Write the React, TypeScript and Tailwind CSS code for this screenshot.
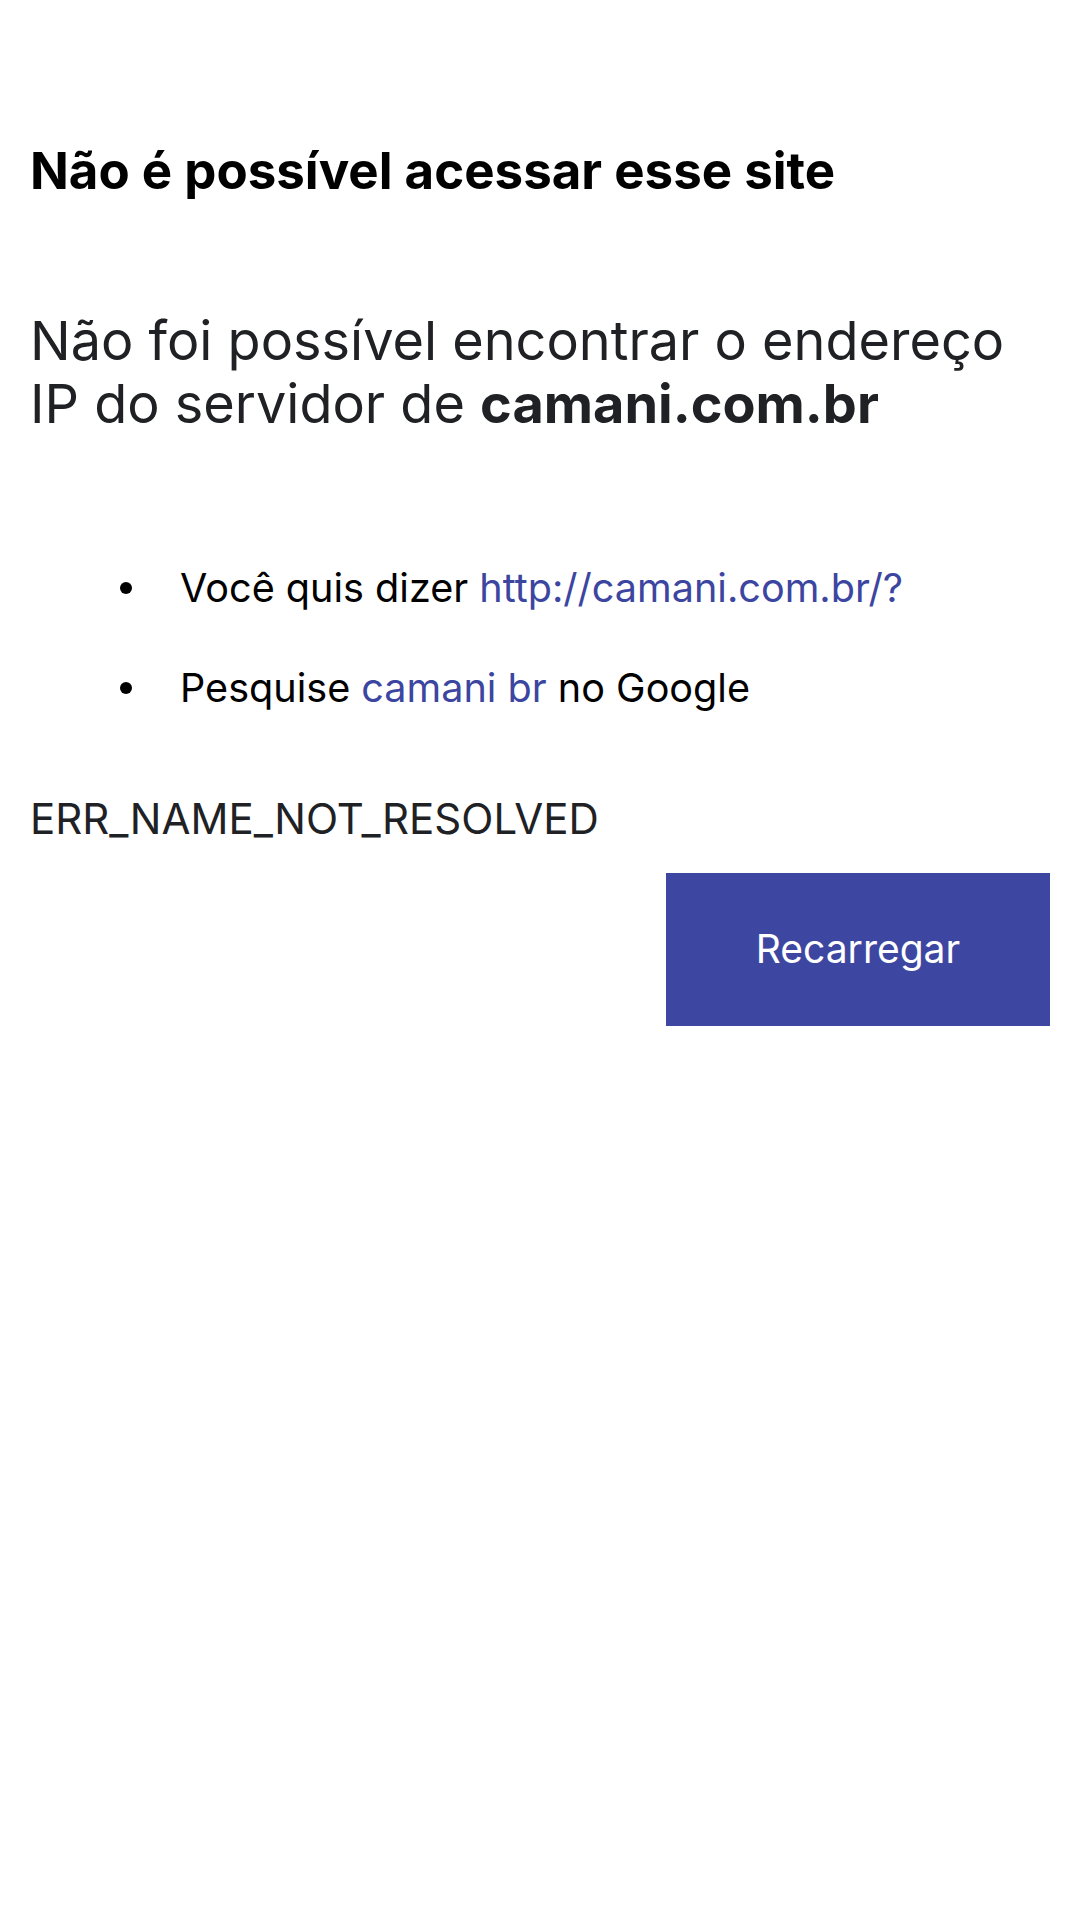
export default function App() {
  return (
    <div
      className="min-h-[1920px] w-[1080px] bg-white px-[30px] pt-[141px] text-[#202124]"
      style={{ fontFamily: "Inter, 'Noto Sans', sans-serif" }}
    >
      <h1 className="text-[51px] font-bold leading-[60px] text-black">
        Não é possível acessar esse site
      </h1>

      <p className="mt-[108px] text-[54px] leading-[63px]">
        Não foi possível encontrar o endereço IP do servidor de{" "}
        <strong className="font-bold">camani.com.br</strong>
      </p>

      <ul className="mt-[129px] flex flex-col gap-[52px] text-[39.6px] leading-[48px] text-black">
        <li className="flex items-center">
          <span className="w-[150px] pl-[90px]">
            <span className="block h-[12px] w-[12px] rounded-full bg-black" />
          </span>
          <span>
            Você quis dizer{" "}
            <a className="text-[#3c46a0]">http://camani.com.br/?</a>
          </span>
        </li>
        <li className="flex items-center">
          <span className="w-[150px] pl-[90px]">
            <span className="block h-[12px] w-[12px] rounded-full bg-black" />
          </span>
          <span>
            Pesquise <a className="text-[#3c46a0]">camani br</a> no Google
          </span>
        </li>
      </ul>

      <div className="mt-[82px] text-[42px] leading-[50px]">
        ERR_NAME_NOT_RESOLVED
      </div>

      <div className="mt-[29px] flex justify-end">
        <button className="flex h-[153px] w-[384px] items-center justify-center bg-[#3d47a1] text-[39px] text-white">
          Recarregar
        </button>
      </div>
    </div>
  );
}
